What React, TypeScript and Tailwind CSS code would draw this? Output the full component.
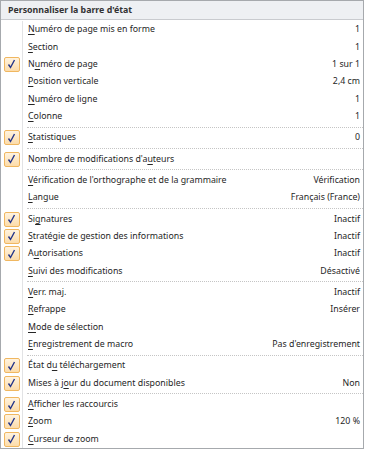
import React from 'react';

type Item = {
  label: string;
  key: number; // index of underlined letter
  value?: string;
  checked?: boolean;
  sepAfter?: boolean;
};

const items: Item[] = [
  { label: 'Numéro de page mis en forme', key: 0, value: '1' },
  { label: 'Section', key: 0, value: '1' },
  { label: 'Numéro de page', key: 1, value: '1 sur 1', checked: true },
  { label: 'Position verticale', key: 0, value: '2,4 cm' },
  { label: 'Numéro de ligne', key: 0, value: '1' },
  { label: 'Colonne', key: 0, value: '1', sepAfter: true },
  { label: 'Statistiques', key: 0, value: '0', checked: true, sepAfter: true },
  { label: "Nombre de modifications d'auteurs", key: 27, checked: true, sepAfter: true },
  { label: "Vérification de l'orthographe et de la grammaire", key: 0, value: 'Vérification' },
  { label: 'Langue', key: 0, value: 'Français (France)', sepAfter: true },
  { label: 'Signatures', key: 2, value: 'Inactif', checked: true },
  { label: 'Stratégie de gestion des informations', key: 0, value: 'Inactif', checked: true },
  { label: 'Autorisations', key: 1, value: 'Inactif', checked: true },
  { label: 'Suivi des modifications', key: 0, value: 'Désactivé', sepAfter: true },
  { label: 'Verr. maj.', key: 0, value: 'Inactif' },
  { label: 'Refrappe', key: 0, value: 'Insérer' },
  { label: 'Mode de sélection', key: 0 },
  { label: 'Enregistrement de macro', key: 0, value: "Pas d'enregistrement", sepAfter: true },
  { label: 'État du téléchargement', key: 6, checked: true },
  { label: 'Mises à jour du document disponibles', key: 9, value: 'Non', checked: true, sepAfter: true },
  { label: 'Afficher les raccourcis', key: 0, checked: true },
  { label: 'Zoom', key: 0, value: '120 %', checked: true },
  { label: 'Curseur de zoom', key: 0, checked: true },
];

function Check() {
  return (
    <div className="w-[16px] h-[15px] rounded-[2px] border border-[#f0b760] bg-gradient-to-b from-[#fff3df] to-[#fcdcaa] flex items-center justify-center">
      <svg width="9" height="10" viewBox="0 0 9 10">
        <path d="M1.5 5.5 L3.5 8.5 L7.5 1" fill="none" stroke="#24358a" strokeWidth="1.4" />
      </svg>
    </div>
  );
}

function Label({ text, k }: { text: string; k: number }) {
  return (
    <span>
      {text.slice(0, k)}
      <span className="underline underline-offset-[1.5px]">{text[k]}</span>
      {text.slice(k + 1)}
    </span>
  );
}

export default function App() {
  return (
    <div className="w-[364px] h-[449px] border border-[#a6a9ad] bg-white flex flex-col text-[8.8px] text-[#262626] font-['Noto_Sans',sans-serif] leading-none overflow-hidden">
      <div className="h-[19px] shrink-0 bg-[#eef0f3] border-b border-[#c9cbcf] px-[7px] flex items-center font-bold text-[#333]">
        Personnaliser la barre d'état
      </div>
      <div className="flex flex-col pt-px">
        {items.map((it, i) => (
          <React.Fragment key={i}>
            <div className="flex h-[17.35px]">
              <div className="w-[22px] shrink-0 border-r border-[#e2e3e5] flex items-center justify-center">
                {it.checked && <Check />}
              </div>
              <div className="flex-1 flex items-center justify-between pl-[5px] pr-[3px] whitespace-nowrap">
                <Label text={it.label} k={it.key} />
                {it.value && <span>{it.value}</span>}
              </div>
            </div>
            {it.sepAfter && (
              <div className="flex h-[4px]">
                <div className="w-[22px] shrink-0 border-r border-[#e2e3e5]" />
                <div className="flex-1 pl-[4px] flex items-center">
                  <div className="w-full border-t border-dotted border-[#c5c5c5]" />
                </div>
              </div>
            )}
          </React.Fragment>
        ))}
      </div>
    </div>
  );
}
